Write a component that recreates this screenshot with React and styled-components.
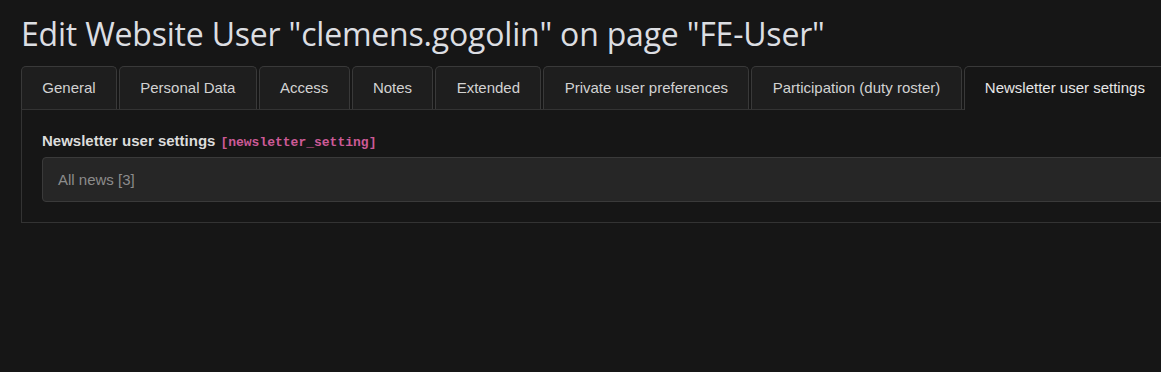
import React from "react";
import styled, { createGlobalStyle } from "styled-components";

const Global = createGlobalStyle`
  html, body { margin: 0; padding: 0; background: #161616; }
  body { font-family: "Liberation Sans", Arial, sans-serif; color: #e0e0e0; overflow: hidden; }
`;

const Page = styled.div`
  padding: 14px 0 0 21px;
  width: 1400px;
`;

const Title = styled.h1`
  margin: 0 0 12px 0;
  font-family: "Open Sans", "Noto Sans", sans-serif;
  font-weight: 400;
  font-size: 32px;
  line-height: 40px;
  color: #dcdee2;
  letter-spacing: -0.2px;
`;

const TabBar = styled.div`
  display: flex;
  align-items: flex-end;
  border-bottom: 1px solid #333;
  height: 43px;
`;

const Tab = styled.div`
  box-sizing: border-box;
  height: ${(p) => (p.$active ? "44px" : "43px")};
  margin-bottom: ${(p) => (p.$active ? "-1px" : "0")};
  margin-right: 2px;
  padding: 0 20.3px;
  display: flex;
  align-items: center;
  padding-bottom: ${(p) => (p.$active ? "3px" : "2px")};
  font-size: 15px;
  color: ${(p) => (p.$active ? "#e6e6e6" : "#d2d2d2")};
  background: ${(p) => (p.$active ? "#161616" : "#1e1e1e")};
  border: 1px solid #393939;
  border-bottom: ${(p) => (p.$active ? "none" : "0")};
  border-radius: 5px 5px 0 0;
  white-space: nowrap;
`;

const Panel = styled.div`
  box-sizing: border-box;
  border: 1px solid #333;
  border-top: none;
  padding: 22px 20px 20px 20px;
`;

const Label = styled.div`
  font-size: 15px;
  font-weight: 700;
  color: #dcdcdc;
  line-height: 18px;
  margin-bottom: 5px;
  display: flex;
  align-items: baseline;
  gap: 5px;
`;

const Code = styled.code`
  font-family: "Liberation Mono", monospace;
  font-size: 13px;
  font-weight: 700;
  color: #cc5a96;
`;

const Select = styled.div`
  box-sizing: border-box;
  height: 45px;
  background: #262626;
  border: 1px solid #3a3a3a;
  border-radius: 4px;
  display: flex;
  align-items: center;
  padding-left: 15px;
  font-size: 15px;
  color: #8c8c8c;
`;

const tabs = [
  "General",
  "Personal Data",
  "Access",
  "Notes",
  "Extended",
  "Private user preferences",
  "Participation (duty roster)",
];

export default function App() {
  return (
    <>
      <Global />
      <Page>
        <Title>Edit Website User "clemens.gogolin" on page "FE-User"</Title>
        <TabBar>
          {tabs.map((t) => (
            <Tab key={t}>{t}</Tab>
          ))}
          <Tab $active>Newsletter user settings</Tab>
        </TabBar>
        <Panel>
          <Label>
            Newsletter user settings <Code>[newsletter_setting]</Code>
          </Label>
          <Select>All news [3]</Select>
        </Panel>
      </Page>
    </>
  );
}
